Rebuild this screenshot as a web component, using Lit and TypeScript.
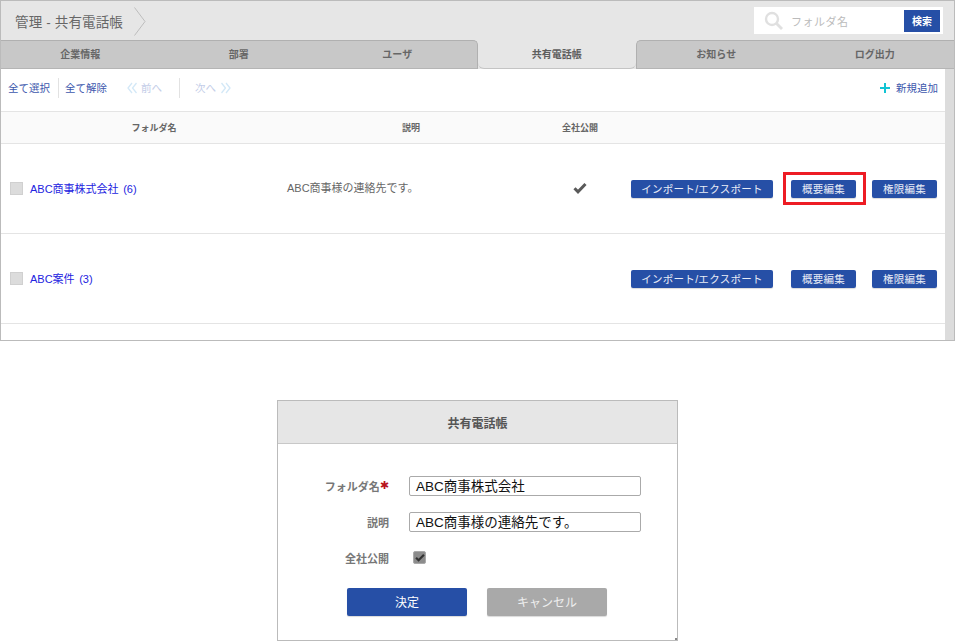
import { LitElement, html, css, svg } from "lit";
import { customElement } from "lit/decorators.js";

const check = svg`<svg viewBox="0 0 14 12" width="14" height="12"><path d="M1.5 6.2 L5 9.8 L12.5 2" fill="none" stroke="#5a5a5a" stroke-width="3"/></svg>`;
const checkDark = svg`<svg viewBox="0 0 14 12" width="10" height="9"><path d="M1.5 6.2 L5 9.8 L12.5 2" fill="none" stroke="#333" stroke-width="3"/></svg>`;

@customElement("app-root")
export class AppRoot extends LitElement {
  static styles = css`
    :host { display: block; width: 955px; height: 641px; position: relative; overflow: hidden; background: #fff;
      font-family: "Liberation Sans", "Noto Sans CJK JP", sans-serif; color: #666; }
    .frame { height: 341px; box-sizing: border-box; border: 1px solid #bbb; display: flex; flex-direction: column; }
    .head { height: 39px; flex: none; background: #e6e6e6; display: flex; align-items: center; box-sizing: border-box; }
    .title { font-size: 13.5px; color: #666; margin-left: 14px; letter-spacing: 0.15px; }
    .chev { margin-left: 11px; margin-top: 1px; flex: none; display: block; }
    .search { margin-left: auto; margin-right: 11px; width: 189px; height: 27px; background: #fff; display: flex; align-items: center; box-sizing: border-box; padding: 0 3px 0 10px; }
    .search svg { flex: none; }
    .search span { font-size: 11px; color: #bbb; margin-left: 7px; letter-spacing: 0.5px; }
    .search b { margin-left: auto; width: 36px; height: 22px; background: #264fa6; color: #fff; font-size: 10px; font-weight: 700; display: flex; align-items: center; justify-content: center; }
    .tabs { display: flex; height: 29px; flex: none; background: #e6e6e6; box-sizing: border-box; }
    .tab { flex: 1; font-size: 10px; font-weight: 700; color: #666; display: flex; align-items: center; justify-content: center; box-sizing: border-box; padding-bottom: 2px; background: #c8c8c8; border-top: 1px solid #b0b0b0; border-bottom: 1px solid #b5b5b5; }
    .tab.on { background: #e6e6e6; border-top: none; border-bottom: 1px solid #c4c4c4; border-radius: 0 0 6px 6px; color: #5e5e5e; padding-bottom: 1px; }
    .tab.after { border-left: 1px solid #b0b0b0; border-top-left-radius: 5px; }
    .tab.before { border-right: 1px solid #b0b0b0; border-top-right-radius: 5px; }
    .content { flex: 1; display: flex; min-height: 0; }
    .main { flex: 1; min-width: 0; display: flex; flex-direction: column; }
    .scroll { width: 9px; flex: none; background: #dcdcdc; }
    .toolbar { height: 43px; flex: none; display: flex; align-items: center; font-size: 10.5px; color: #3d58ad; box-sizing: border-box; border-bottom: 1px solid #e4e4e4; padding: 0 0 5px 7px; }
    .sep { width: 1px; height: 20px; background: #e2e2e2; margin: 0 6px 0 8px; }
    .gap1 { width: 20px; }
    .dim { color: #c3cde8; }
    .prev { margin-left: 4px; }
    .sep2 { margin: 0 15px 0 17px; }
    .next { margin-left: 5px; transform: scaleX(-1); }
    .new { margin-left: auto; margin-right: 7px; display: flex; align-items: center; gap: 6px; }
    .row { display: grid; grid-template-columns: 280px 260px 78px 1fr; box-sizing: border-box; border-bottom: 1px solid #e4e4e4; align-items: center; flex: none; }
    .hdr { height: 32px; background: #fafafa; font-size: 9px; font-weight: 700; color: #666; }
    .hdr div { text-align: center; }
    .hdr div:first-child { padding-left: 26px; }
    .item { height: 90px; font-size: 11px; }
    .name { display: flex; align-items: center; padding-left: 9px; color: #2323e0; word-spacing: 1.5px; }
    .nm { margin-bottom: 2px; }
    .box { width: 11px; height: 11px; background: #dcdcdc; border: 1px solid #d0d0d0; margin-right: 7px; flex: none; }
    .desc { padding: 0 0 3px 6px; color: #666; }
    .pub { display: flex; justify-content: center; padding-bottom: 2px; }
    .acts { display: flex; padding-left: 12px; }
    .btn { height: 18px; background: #264fa6; color: #e8ecf6; font-size: 10.5px; border-radius: 2px; display: flex; align-items: center; justify-content: center; box-shadow: 0 1px 1px rgba(0,0,0,.15); letter-spacing: 0.3px; padding-bottom: 1px; box-sizing: border-box; }
    .w1 { width: 142px; margin-right: 18px; }
    .w2 { width: 65px; margin-right: 16px; }
    .red { position: absolute; left: 783px; top: 172px; width: 83px; height: 33px; box-sizing: border-box; border: 3px solid #ed1c24; }
    .modal { position: absolute; left: 277px; top: 400px; width: 401px; height: 241px; box-sizing: border-box; border: 1px solid #bbb; display: flex; flex-direction: column; align-items: stretch; }
    .mhead { height: 43px; flex: none; background: #e6e6e6; border-bottom: 1px solid #c8c8c8; display: flex; align-items: center; justify-content: center; font-size: 12px; font-weight: 700; color: #555; box-sizing: border-box; }
    .form { display: grid; grid-template-columns: 111px 232px; column-gap: 20px; padding-top: 24px; align-items: center; grid-auto-rows: 36px; }
    .lab { display: flex; align-items: center; justify-content: flex-end; font-size: 11px; font-weight: 700; color: #777; padding-bottom: 1px; }
    .req { color: #b8141e; font-family: "DejaVu Sans", sans-serif; font-size: 11px; margin-left: 0; }
    .inp { height: 20px; box-sizing: border-box; border: 1px solid #aaa; border-radius: 2px; font-size: 13.5px; color: #111; padding: 0 6px 2px; display: flex; align-items: center; white-space: nowrap; background: #fff; }
    .cb { width: 13px; height: 13px; background: #8c8c8c; border: 1px solid #aaa; border-radius: 2px; box-sizing: border-box; display: flex; align-items: center; justify-content: center; margin: -2px 0 0 4px; }
    .mbtns { display: flex; padding-left: 69px; gap: 20px; margin-top: 12px; }
    .mb { width: 120px; height: 28px; border-radius: 2px; display: flex; align-items: center; justify-content: center; font-size: 12px; color: #fff; box-shadow: 0 1px 1px rgba(0,0,0,.15); padding-bottom: 2px; box-sizing: border-box; }
    .ok { background: #264fa6; }
    .ng { background: #a9a9a9; color: #eee; }
    .grip { position: absolute; right: 0; bottom: 0; width: 2px; height: 2px; background: #888; }
  `;

  private row(name: string, desc: string, pub: boolean) {
    return html`<div class="row item">
      <div class="name"><span class="box"></span><span class="nm">${name}</span></div>
      <div class="desc">${desc}</div>
      <div class="pub">${pub ? check : ""}</div>
      <div class="acts">
        <div class="btn w1">インポート/エクスポート</div>
        <div class="btn w2">概要編集</div>
        <div class="btn w2">権限編集</div>
      </div>
    </div>`;
  }

  private chevs(cls: string) {
    return html`<svg class="${cls}" width="10" height="12" viewBox="0 0 10 12"><path d="M5 1 L1 6 L5 11 M9.5 1 L5.5 6 L9.5 11" fill="none" stroke="#d3e8f7" stroke-width="1.3"/></svg>`;
  }

  render() {
    return html`
      <div class="frame">
        <div class="head">
          <span class="title">管理 - 共有電話帳</span>
          <svg class="chev" width="12" height="29" viewBox="0 0 12 29"><path d="M0.5 0.5 L11 14.5 L0.5 28.5" fill="none" stroke="#bdbdbd" stroke-width="1"/></svg>
          <div class="search">
            <svg width="20" height="20" viewBox="0 0 20 20"><circle cx="8" cy="8" r="6" fill="none" stroke="#e0e0e0" stroke-width="2.4"/><path d="M12.5 12.5 L18 18" stroke="#e0e0e0" stroke-width="2.8"/></svg>
            <span>フォルダ名</span>
            <b>検索</b>
          </div>
        </div>
        <div class="tabs">
          <div class="tab">企業情報</div>
          <div class="tab">部署</div>
          <div class="tab before">ユーザ</div>
          <div class="tab on">共有電話帳</div>
          <div class="tab after">お知らせ</div>
          <div class="tab">ログ出力</div>
        </div>
        <div class="content">
          <div class="main">
            <div class="toolbar">
              <span>全て選択</span><span class="sep"></span><span>全て解除</span>
              <span class="gap1"></span>${this.chevs("")}<span class="dim prev">前へ</span>
              <span class="sep sep2"></span>
              <span class="dim">次へ</span>${this.chevs("next")}
              <span class="new"><svg width="10" height="10" viewBox="0 0 10 10"><path d="M5 0 V10 M0 5 H10" stroke="#12c4d4" stroke-width="2"/></svg>新規追加</span>
            </div>
            <div class="row hdr"><div>フォルダ名</div><div>説明</div><div>全社公開</div><div></div></div>
            ${this.row("ABC商事株式会社 (6)", "ABC商事様の連絡先です。", true)}
            ${this.row("ABC案件 (3)", "", false)}
          </div>
          <div class="scroll"></div>
        </div>
      </div>
      <div class="red"></div>
      <div class="modal">
        <div class="mhead">共有電話帳</div>
        <div class="form">
          <div class="lab">フォルダ名<span class="req">✱</span></div>
          <div class="inp">ABC商事株式会社</div>
          <div class="lab">説明</div>
          <div class="inp">ABC商事様の連絡先です。</div>
          <div class="lab">全社公開</div>
          <div><div class="cb">${checkDark}</div></div>
        </div>
        <div class="mbtns"><div class="mb ok">決定</div><div class="mb ng">キャンセル</div></div>
        <span class="grip"></span>
      </div>
    `;
  }
}
